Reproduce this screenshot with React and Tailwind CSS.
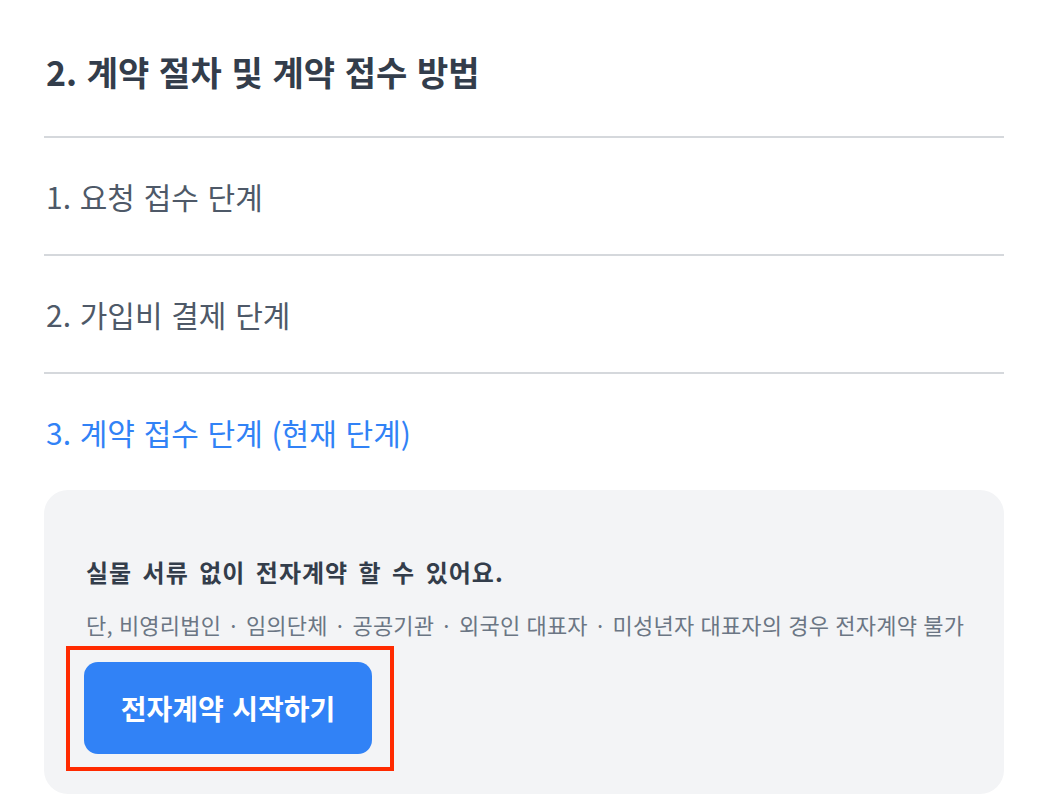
export default function App() {
  const steps = [
    { label: "1. 요청 접수 단계", active: false },
    { label: "2. 가입비 결제 단계", active: false },
    { label: "3. 계약 접수 단계 (현재 단계)", active: true },
  ]

  return (
    <div
      className="min-h-screen bg-white pl-[44px] pr-[36px] pt-[52px]"
      style={{ fontFamily: '"Noto Sans CJK KR", "Noto Sans", sans-serif' }}
    >
      {/* Section title */}
      <h2 className="text-[34px] leading-[40px] font-bold text-[#333d4b] pl-[2px] mb-[44px] [word-spacing:2px]">
        2. 계약 절차 및 계약 접수 방법
      </h2>

      {/* Step list */}
      <div className="border-t-2 border-[#d5d8dc]">
        {steps.map((s, i) => (
          <div
            key={i}
            className={`h-[116px] flex items-center pl-[2px] text-[30px] [word-spacing:2px] ${
              s.active ? "text-[#3182f6]" : "text-[#4e5968] h-[118px] border-b-2 border-[#d5d8dc]"
            }`}
          >
            {s.label}
          </div>
        ))}
      </div>

      {/* Current step panel */}
      <div className="bg-[#f3f4f6] rounded-[24px] px-[40px] pt-[66px] pb-[40px]">
        <p className="text-[24px] leading-[32px] font-bold text-[#333d4b] pl-[2px] tracking-[1px] [word-spacing:4px]">
          실물 서류 없이 전자계약 할 수 있어요.
        </p>
        <p className="mt-[22px] text-[22px] leading-[28px] text-[#6b7684] pl-[2px] whitespace-nowrap tracking-[0.2px] [word-spacing:1px]">
          단, 비영리법인 · 임의단체 · 공공기관 · 외국인 대표자 · 미성년자 대표자의 경우 전자계약 불가
        </p>
        <div className="mt-[24px]">
          <button className="relative w-[288px] h-[92px] rounded-[14px] bg-[#3182f6] text-white text-[28px] font-bold [word-spacing:2px]">
            전자계약 시작하기
            <span className="absolute -left-[18px] -right-[22px] -top-[16px] -bottom-[17px] border-4 border-[#ff2a00] pointer-events-none" />
          </button>
        </div>
      </div>
    </div>
  )
}
